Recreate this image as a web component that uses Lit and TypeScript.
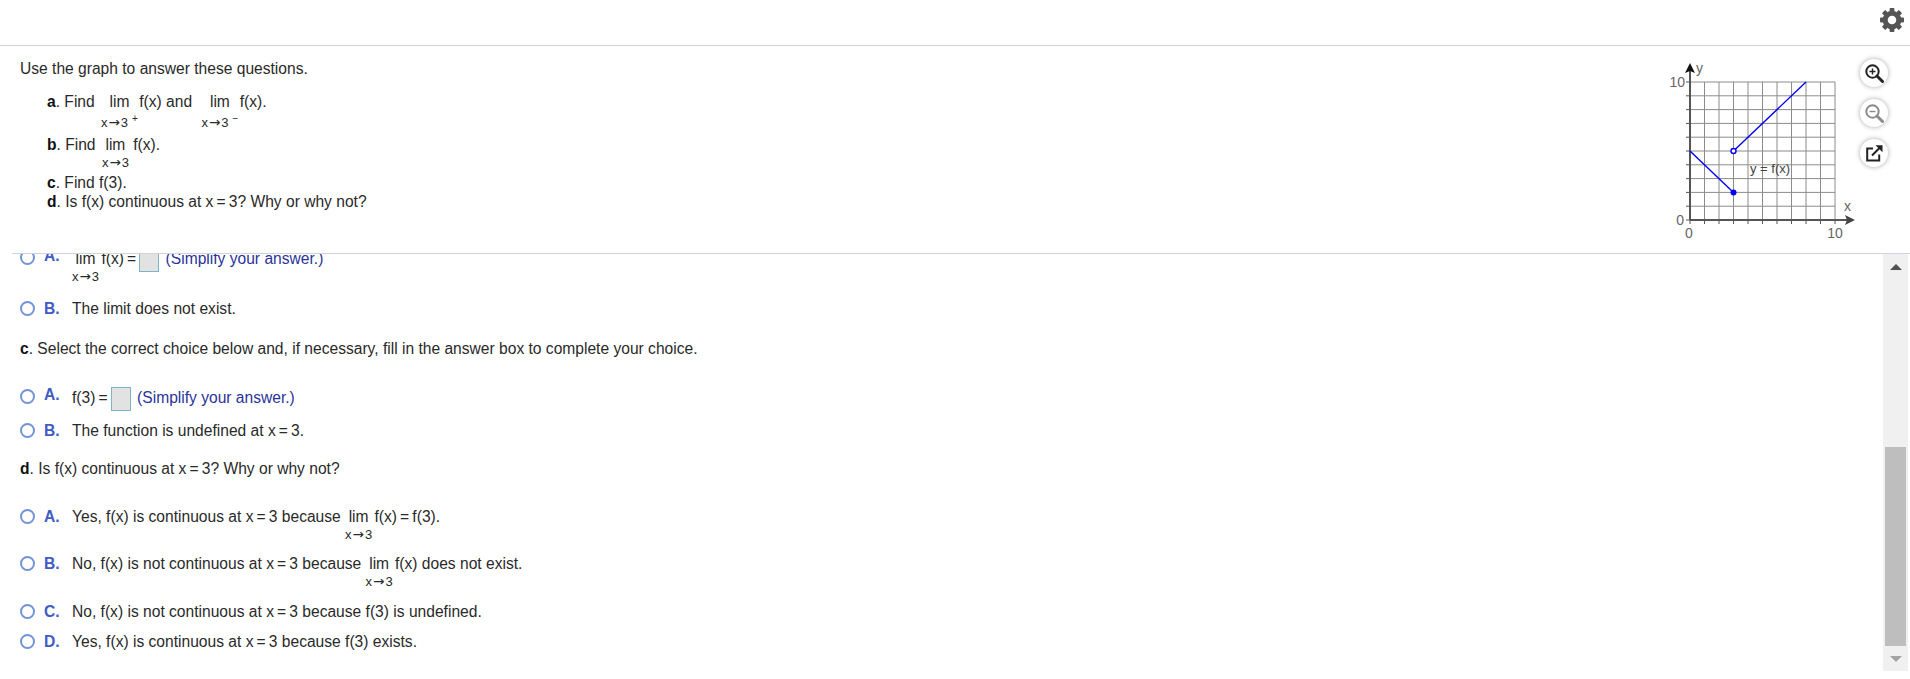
import { LitElement, css, html, svg } from 'lit';
import { customElement } from 'lit/decorators.js';

const X0 = 35;
const Y0 = 174;
const DX = 14.5;
const DY = 13.8;
const px = (v: number) => X0 + v * DX;
const py = (v: number) => Y0 - v * DY;
const steps = Array.from({ length: 11 }, (_, i) => i);

function graph() {
    return html`
    <svg class="graph" width="205" height="207" viewBox="0 0 205 207">
        ${steps.map(i => svg`
            <line class="grid" x1=${px(i)} y1=${py(0)} x2=${px(i)} y2=${py(10)}></line>
            <line class="grid" x1=${px(0)} y1=${py(i)} x2=${px(10)} y2=${py(i)}></line>
            <line class="tick" x1=${px(i)} y1=${py(0)} x2=${px(i)} y2=${py(0) + 4}></line>
            <line class="tick" x1=${px(0) - 4} y1=${py(i)} x2=${px(0)} y2=${py(i)}></line>
        `)}
        <line class="axis" x1=${px(0)} y1=${py(0)} x2=${px(0)} y2="24"></line>
        <line class="axis" x1=${px(0)} y1=${py(0)} x2="192" y2=${py(0)}></line>
        <polygon class="arrow-y" points="35,17 30,27 35,25 40,27"></polygon>
        <polygon class="arrow-x" points="200,174 190,169 192,174 190,179"></polygon>

        <line class="curve" x1=${px(0)} y1=${py(5)} x2=${px(3)} y2=${py(2)}></line>
        <line class="curve" x1=${px(3)} y1=${py(5)} x2=${px(8)} y2=${py(10)}></line>
        <circle class="open" cx=${px(3)} cy=${py(5)} r="2.5"></circle>
        <circle class="dot" cx=${px(3)} cy=${py(2)} r="3"></circle>

        <text x="41" y="27">y</text>
        <text x="189" y="165">x</text>
        <text class="fx" x="115" y="127" text-anchor="middle">y = f(x)</text>
        <text x="30" y="41" text-anchor="end">10</text>
        <text x="29" y="179" text-anchor="end">0</text>
        <text x="34" y="192" text-anchor="middle">0</text>
        <text x="180" y="192" text-anchor="middle">10</text>
    </svg>`;
}

const gearTeeth = [0, 45, 90, 135, 180, 225, 270, 315];

// the x = 3 style expressions have narrow spaces in the original
const eq = '\u2009=\u2009';

@customElement('app-root')
export class AppRoot extends LitElement {
    lim(sup: unknown = '') {
        return html`<span class="lim"><span>lim</span><span class="sub">x<span class="arr">→</span>3${sup}</span></span>`;
    }

    choice(letter: string, content: unknown, cls = '') {
        return html`
        <div class="choice ${cls}">
            <span class="radio"></span>
            <span class="letter">${letter}.</span>
            <div class="body">${content}</div>
        </div>`;
    }

    render() {
        return html`
        <div class="topbar">
            <svg class="gear" width="26" height="26" viewBox="-13 -13 26 26">
                ${gearTeeth.map(a => svg`<rect x="-2.4" y="-12" width="4.8" height="6" rx="0.8" transform="rotate(${a})"></rect>`)}
                <circle r="6.8" fill="none" stroke="#555" stroke-width="5"></circle>
            </svg>
        </div>

        <div class="question">
            <div class="prompt">
                <p class="intro">Use the graph to answer these questions.</p>
                <div class="parts">
                    <div class="tall"><b>a</b>. Find ${this.lim(html`<sup>+</sup>`)} f(x) and ${this.lim(html`<sup>−</sup>`)} f(x).</div>
                    <div class="tall"><b>b</b>. Find ${this.lim()} f(x).</div>
                    <div><b>c</b>. Find f(3).</div>
                    <div><b>d</b>. Is f(x) continuous at x${eq}3? Why or why not?</div>
                </div>
            </div>
            ${graph()}
            <div class="tools">
                <button class="tool">
                    <svg width="20" height="20" viewBox="0 0 20 20">
                        <circle cx="8.5" cy="8.5" r="6.2" fill="none" stroke="#222" stroke-width="2"></circle>
                        <path d="M13 13l5.5 5.5" stroke="#222" stroke-width="3" stroke-linecap="round"></path>
                        <path d="M5.5 8.5h6M8.5 5.5v6" stroke="#222" stroke-width="1.4"></path>
                    </svg>
                </button>
                <button class="tool">
                    <svg width="20" height="20" viewBox="0 0 20 20">
                        <circle cx="8.5" cy="8.5" r="6.2" fill="none" stroke="#8a8a8a" stroke-width="2"></circle>
                        <path d="M13 13l5.5 5.5" stroke="#8a8a8a" stroke-width="3" stroke-linecap="round"></path>
                        <path d="M5.5 8.5h6" stroke="#8a8a8a" stroke-width="1.4"></path>
                    </svg>
                </button>
                <button class="tool">
                    <svg width="20" height="20" viewBox="0 0 20 20">
                        <path d="M9 5.5H3.2v12h12v-6" fill="none" stroke="#222" stroke-width="2"></path>
                        <path d="M8 12.5l8-8" stroke="#222" stroke-width="2"></path>
                        <path d="M11.5 2.2h7v7z" fill="#222"></path>
                    </svg>
                </button>
            </div>
        </div>

        <div class="pane">
            <div class="scroll">
                <div class="content">
                    ${this.choice('A', html`${this.lim()} f(x)${eq}<span class="box"></span> <span class="hint">(Simplify your answer.)</span>`, 'boxed')}
                    ${this.choice('B', 'The limit does not exist.', 'gap-14')}
                    <p class="gap-21"><b>c</b>. Select the correct choice below and, if necessary, fill in the answer box to complete your choice.</p>
                    ${this.choice('A', html`f(3)${eq}<span class="box"></span> <span class="hint">(Simplify your answer.)</span>`, 'boxed gap-29')}
                    ${this.choice('B', `The function is undefined at x${eq}3.`, 'gap-10')}
                    <p class="gap-19"><b>d</b>. Is f(x) continuous at x${eq}3? Why or why not?</p>
                    ${this.choice('A', html`Yes, f(x) is continuous at x${eq}3 because ${this.lim()} f(x)${eq}f(3).`, 'gap-29')}
                    ${this.choice('B', html`No, f(x) is not continuous at x${eq}3 because ${this.lim()} f(x) does not exist.`, 'gap-11')}
                    ${this.choice('C', `No, f(x) is not continuous at x${eq}3 because f(3) is undefined.`, 'gap-12')}
                    ${this.choice('D', `Yes, f(x) is continuous at x${eq}3 because f(3) exists.`, 'gap-11')}
                </div>
            </div>
            <div class="scrollbar">
                <span class="up"></span>
                <span class="thumb"></span>
                <span class="down"></span>
            </div>
        </div>
        `;
    }

    static styles = css`
        :host{
            display: flex;
            flex-direction: column;
            height: 679px;
            background: #fff;
            color: #2a2a2a;
            font-family: "Liberation Sans", Arial, sans-serif;
            font-size: 15.6px;
            line-height: 19px;
            overflow: hidden;
        }

        p{
            margin: 0;
        }
        b{
            color: #111;
        }

        .topbar{
            flex: none;
            display: flex;
            justify-content: flex-end;
            align-items: center;
            height: 46px;
            padding-right: 5px;
            box-sizing: border-box;
            border-bottom: 1px solid #d3d3de;
        }
        .gear{
            fill: #555;
            margin-bottom: 5px;
        }

        .question{
            flex: none;
            display: flex;
            height: 207px;
            padding-right: 22px;
        }
        .prompt{
            flex: 1;
            padding: 13px 0 0 20px;
        }
        .parts{
            margin: 14px 0 0 27px;
        }
        .tall{
            min-height: 38px;
        }
        .parts .lim{
            margin: 0 0 0 2px;
        }
        .parts .tall:first-child{
            min-height: 43px;
        }
        .parts .tall:first-child .sub{
            margin-top: 3px;
        }
        .parts .tall:first-child .lim{
            margin: 0 -3px 0 2px;
        }
        .parts .tall:first-child .lim:nth-of-type(2){
            margin-left: 5px;
        }

        .graph{
            flex: none;
        }
        .graph text{
            font-size: 14px;
            fill: #666;
        }
        .graph .fx{
            font-size: 13px;
            fill: #444;
        }
        .grid{
            stroke: #8c8c8c;
            stroke-width: 1;
        }
        .tick{
            stroke: #555;
            stroke-width: 1;
        }
        .axis{
            stroke: #555;
            stroke-width: 2;
        }
        .arrow-y{
            fill: #111;
        }
        .arrow-x{
            fill: #444;
        }
        .curve{
            stroke: #0000ff;
            stroke-width: 1.4;
        }
        .open{
            fill: #fff;
            stroke: #0000ff;
            stroke-width: 1.4;
        }
        .dot{
            fill: #0000ff;
        }

        .tools{
            flex: none;
            display: flex;
            flex-direction: column;
            gap: 12px;
            padding-top: 13px;
        }
        .tool{
            display: flex;
            align-items: center;
            justify-content: center;
            width: 28px;
            height: 28px;
            padding: 0;
            border: none;
            border-radius: 50%;
            background: #fff;
            box-shadow: 0 0 5px rgba(0, 0, 0, 0.35);
        }

        .pane{
            flex: 1;
            min-height: 0;
            display: flex;
            margin-left: 12px;
            padding: 0 2px 8px 0;
            border-top: 1px solid #d3d3de;
        }
        .scroll{
            flex: 1;
            overflow: hidden;
        }
        .content{
            margin-top: -6px;
            padding-left: 8px;
        }

        .choice{
            display: flex;
            align-items: flex-start;
        }
        .radio{
            flex: none;
            box-sizing: border-box;
            width: 15px;
            height: 15px;
            margin-top: 2px;
            border: 2px solid #7492d8;
            border-radius: 50%;
            background: #fff;
        }
        .letter{
            flex: none;
            width: 28px;
            margin-left: 9px;
            font-weight: bold;
            color: #3f5cc6;
        }
        .boxed .letter{
            margin-top: -2px;
        }
        .hint{
            margin-left: 2px;
            color: #2b3399;
        }
        .box{
            display: inline-block;
            vertical-align: middle;
            box-sizing: border-box;
            width: 20px;
            height: 24px;
            border: 1px solid #7fb3c8;
            background: #e2e2e2;
        }

        .lim{
            display: inline-flex;
            flex-direction: column;
            align-items: center;
            margin-right: -2px;
            vertical-align: baseline;
        }
        .sub{
            font-size: 13px;
            line-height: 17px;
            white-space: nowrap;
        }
        .arr{
            margin: 0 1px;
            font-family: "DejaVu Sans", sans-serif;
            font-size: 13.5px;
        }
        sup{
            font-size: 10px;
            line-height: 0;
            margin-left: 4px;
        }

        .gap-10{ margin-top: 10px; }
        .gap-11{ margin-top: 11px; }
        .gap-12{ margin-top: 12px; }
        .gap-14{ margin-top: 14px; }
        .gap-19{ margin-top: 19px; }
        .gap-21{ margin-top: 21px; }
        .gap-29{ margin-top: 29px; }

        .scrollbar{
            flex: none;
            display: flex;
            flex-direction: column;
            align-items: center;
            width: 25px;
            background: #f0f0f0;
        }
        .up, .down{
            flex: none;
            width: 0;
            height: 0;
            border-left: 6px solid transparent;
            border-right: 6px solid transparent;
        }
        .up{
            margin-top: 10px;
            border-bottom: 6px solid #505050;
        }
        .thumb{
            width: 21px;
            height: 199px;
            margin-top: 177px;
            background: #bebebe;
        }
        .down{
            margin-top: 10px;
            border-top: 6px solid #a3a3a3;
        }
    `;
}
